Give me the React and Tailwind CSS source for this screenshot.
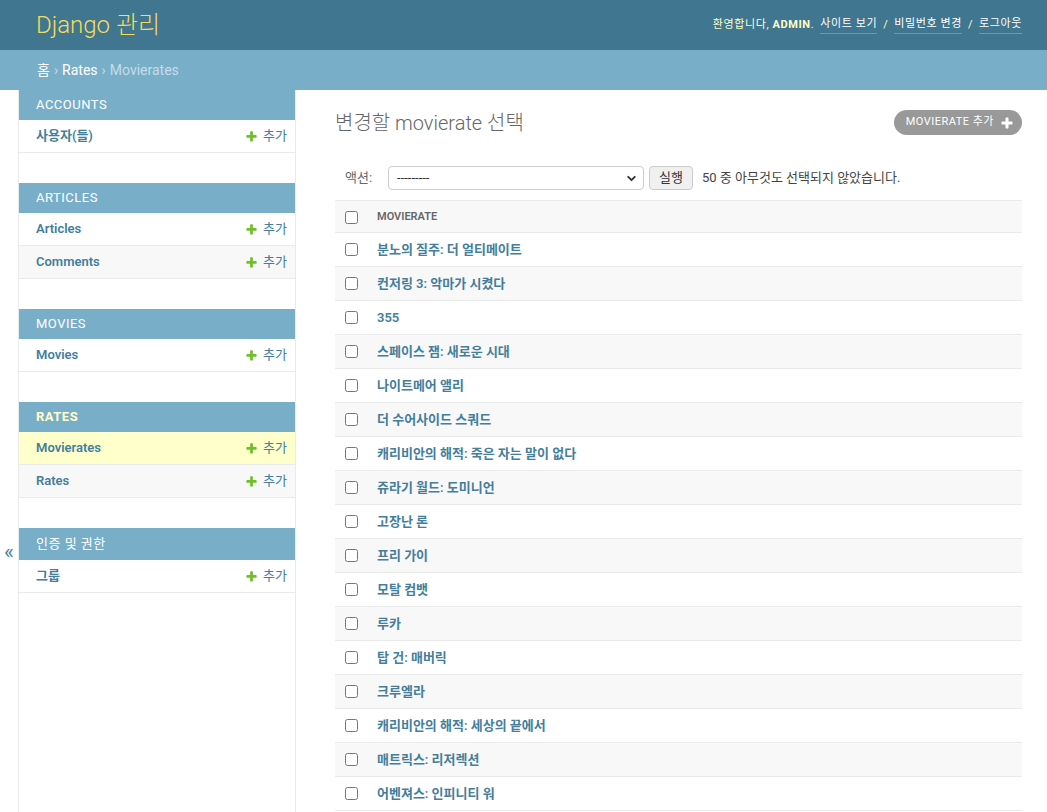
import { ChevronDown } from 'lucide-react'

const font = { fontFamily: 'Roboto, "Noto Sans CJK KR", sans-serif' }

const apps = [
  { name: 'Accounts', models: ['사용자(들)'] },
  { name: 'Articles', models: ['Articles', 'Comments'] },
  { name: 'Movies', models: ['Movies'] },
  { name: 'Rates', models: ['Movierates', 'Rates'], current: true },
  { name: '인증 및 권한', models: ['그룹'], tall: true },
]

const movies = [
  '분노의 질주: 더 얼티메이트',
  '컨저링 3: 악마가 시켰다',
  '355',
  '스페이스 잼: 새로운 시대',
  '나이트메어 앨리',
  '더 수어사이드 스쿼드',
  '캐리비안의 해적: 죽은 자는 말이 없다',
  '쥬라기 월드: 도미니언',
  '고장난 론',
  '프리 가이',
  '모탈 컴뱃',
  '루카',
  '탑 건: 매버릭',
  '크루엘라',
  '캐리비안의 해적: 세상의 끝에서',
  '매트릭스: 리저렉션',
  '어벤져스: 인피니티 워',
]

function PlusIcon({ color = '#70bf2b', size = 13 }) {
  return (
    <svg width={size} height={size} viewBox="0 0 1792 1792">
      <path fill={color} d="M1600 796v192q0 40-28 68t-68 28h-416v416q0 40-28 68t-68 28h-192q-40 0-68-28t-28-68v-416h-416q-40 0-68-28t-28-68v-192q0-40 28-68t68-28h416v-416q0-40 28-68t68-28h192q40 0 68 28t28 68v416h416q40 0 68 28t28 68z" />
    </svg>
  )
}

function Module({ app }) {
  return (
    <div className="mb-[30px]">
      <div className={`${app.tall ? 'h-[32px]' : 'h-[30px]'} flex items-center pl-[17px] text-[13px] uppercase tracking-[0.5px] bg-[#79aec8] ${app.current ? 'text-[#ffffcc] font-bold' : 'text-white'}`}>
        {app.name}
      </div>
      {app.models.map((m, i) => {
        const active = app.current && m === 'Movierates'
        const bg = active ? 'bg-[#ffffcc]' : i % 2 ? 'bg-[#f8f8f8]' : 'bg-white'
        return (
          <div key={m} className={`h-[33px] flex items-center justify-between border-b border-[#eaeaea] pl-[17px] pr-2 ${bg}`}>
            <span className="text-[13px] font-semibold text-[#447e9b]">{m}</span>
            <span className="flex items-center gap-[5px] text-[13px] text-[#447e9b]">
              <PlusIcon />
              추가
            </span>
          </div>
        )
      })}
    </div>
  )
}

export default function App() {
  return (
    <div className="min-h-screen flex flex-col bg-white text-[#333]" style={font}>
      {/* 헤더 */}
      <header className="h-[50px] shrink-0 flex items-center justify-between bg-[#417690] pl-[36px] pr-[25px]">
        <h1 className="text-[24px] font-light text-[#f5dd5d] leading-none">Django 관리</h1>
        <div className="text-[11px] tracking-[0.6px] text-[#ffffcc] flex items-center gap-[6px]">
          <span>환영합니다, <strong className="font-bold">ADMIN</strong>.</span>
          <a className="text-white border-b border-white/25 pb-[1px]">사이트 보기</a>
          <span>/</span>
          <a className="text-white border-b border-white/25 pb-[1px]">비밀번호 변경</a>
          <span>/</span>
          <a className="text-white border-b border-white/25 pb-[1px]">로그아웃</a>
        </div>
      </header>

      {/* 브레드크럼 */}
      <div className="h-[40px] shrink-0 flex items-center gap-[4px] bg-[#79aec8] pl-[37px] text-[14px] text-[#c4dce8]">
        <a className="text-white">홈</a>
        <span>›</span>
        <a className="text-white">Rates</a>
        <span>›</span>
        <span>Movierates</span>
      </div>

      <div className="flex flex-1">
        {/* 사이드바 토글 */}
        <div className="w-[19px] shrink-0 border-r border-[#eaeaea] flex justify-center">
          <span className="mt-[452px] text-[21px] leading-none text-[#447e9b]">«</span>
        </div>

        {/* 사이드바 */}
        <nav className="w-[277px] shrink-0 border-r border-[#eaeaea]">
          {apps.map((app) => (
            <Module key={app.name} app={app} />
          ))}
        </nav>

        {/* 본문 */}
        <main className="flex-1 pl-[39px] pr-[25px] pt-5">
          <div className="flex items-center justify-between mb-[21px]">
            <h1 className="text-[20px] leading-[24px] font-light text-[#666]">변경할 movierate 선택</h1>
            <a className="h-[25px] flex items-center gap-[6px] rounded-full bg-[#999] pl-3 pr-[8px] text-[11px] tracking-[0.5px] uppercase text-white">
              Movierate 추가
              <PlusIcon color="#fff" size={14} />
            </a>
          </div>

          {/* 액션 */}
          <div className="flex items-center p-[10px] text-[13px] text-[#666]">
            <span>액션:</span>
            <div className="relative ml-[16px] w-[256px]">
              <select className="w-full h-[24px] appearance-none rounded-[4px] border border-[#ccc] bg-white pl-[8px] text-[13px] text-[#333]">
                <option>---------</option>
              </select>
              <ChevronDown className="absolute right-[6px] top-[6px] pointer-events-none" size={13} strokeWidth={3.5} color="#333" />
            </div>
            <button className="ml-[5px] h-[24px] px-[9px] rounded-[4px] border border-[#ccc] bg-[#f0f0f0] text-[13px] text-[#333]">실행</button>
            <span className="ml-[9px] text-[#444]">50 중 아무것도 선택되지 않았습니다.</span>
          </div>

          {/* 목록 */}
          <div>
            <div className="h-[33px] pt-[1px] flex items-center bg-[#f8f8f8] border-t border-b border-[#eaeaea]">
              <div className="w-[42px] pl-[10px] flex items-center">
                <input type="checkbox" className="w-[13px] h-[13px]" />
              </div>
              <span className="text-[11px] font-semibold uppercase text-[#666]">Movierate</span>
            </div>
            {movies.map((m, i) => (
              <div key={m} className={`h-[34px] flex items-center border-b border-[#eaeaea] ${i % 2 ? 'bg-[#f8f8f8]' : 'bg-white'}`}>
                <div className="w-[42px] pl-[10px] flex items-center">
                  <input type="checkbox" className="w-[13px] h-[13px]" />
                </div>
                <a className="text-[13px] font-semibold text-[#447e9b]">{m}</a>
              </div>
            ))}
          </div>
        </main>
      </div>
    </div>
  )
}
